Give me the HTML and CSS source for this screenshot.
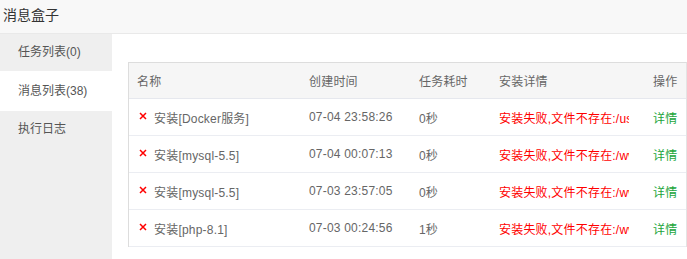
FILE: index.html
```html
<!DOCTYPE html>
<html lang="zh-CN">
<head>
<meta charset="utf-8">
<title>消息盒子</title>
<link rel="stylesheet" href="styles.css">
</head>
<body>
<div class="box">
  <div class="title">消息盒子</div>
  <div class="main">
    <ul class="side">
      <li class="tab">任务列表(0)</li>
      <li class="tab active">消息列表(38)</li>
      <li class="tab">执行日志</li>
    </ul>
    <div class="content">
      <div class="table">
        <div class="row head">
          <div class="cell">名称</div>
          <div class="cell">创建时间</div>
          <div class="cell">任务耗时</div>
          <div class="cell">安装详情</div>
          <div class="cell">操作</div>
        </div>
        <div class="row">
          <div class="cell name"><svg class="x" viewBox="0 0 8 8"><path d="M1 1L7 7M7 1L1 7"/></svg>安装[Docker服务]</div>
          <div class="cell">07-04 23:58:26</div>
          <div class="cell">0秒</div>
          <div class="cell"><div class="err">安装失败,文件不存在:/usr/local/docker</div></div>
          <div class="cell"><a class="link">详情</a></div>
        </div>
        <div class="row">
          <div class="cell name"><svg class="x" viewBox="0 0 8 8"><path d="M1 1L7 7M7 1L1 7"/></svg>安装[mysql-5.5]</div>
          <div class="cell">07-04 00:07:13</div>
          <div class="cell">0秒</div>
          <div class="cell"><div class="err">安装失败,文件不存在:/www/server/mysql</div></div>
          <div class="cell"><a class="link">详情</a></div>
        </div>
        <div class="row">
          <div class="cell name"><svg class="x" viewBox="0 0 8 8"><path d="M1 1L7 7M7 1L1 7"/></svg>安装[mysql-5.5]</div>
          <div class="cell">07-03 23:57:05</div>
          <div class="cell">0秒</div>
          <div class="cell"><div class="err">安装失败,文件不存在:/www/server/mysql</div></div>
          <div class="cell"><a class="link">详情</a></div>
        </div>
        <div class="row">
          <div class="cell name"><svg class="x" viewBox="0 0 8 8"><path d="M1 1L7 7M7 1L1 7"/></svg>安装[php-8.1]</div>
          <div class="cell">07-03 00:24:56</div>
          <div class="cell">1秒</div>
          <div class="cell"><div class="err">安装失败,文件不存在:/www/server/php</div></div>
          <div class="cell"><a class="link">详情</a></div>
        </div>
      </div>
    </div>
  </div>
</div>
</body>
</html>
```

FILE: styles.css
```css
* { box-sizing: border-box; }
html, body {
  margin: 0;
  padding: 0;
  background: #fff;
}
body {
  font-family: "Liberation Sans", "Noto Sans CJK SC", sans-serif;
  font-size: 12px;
  color: #666;
  width: 687px;
  height: 259px;
  overflow: hidden;
}
.box {
  display: flex;
  flex-direction: column;
  height: 259px;
}
.title {
  height: 34px;
  line-height: 30px;
  padding-left: 3px;
  font-size: 14px;
  color: #333;
  background: #f8f8f8;
  border-bottom: 1px solid #e9e9e9;
}
.main {
  flex: 1;
  display: flex;
}
.side {
  list-style: none;
  margin: 0;
  padding: 0;
  width: 112px;
  background: #efefef;
}
.tab {
  height: 37px;
  line-height: 37px;
  padding-left: 18px;
  color: #555;
}
.tab.active {
  height: 40px;
  line-height: 40px;
  background: #fff;
}
.content {
  flex: 1;
  padding: 28px 0 0 16px;
}
.table {
  border: 1px solid #ddd;
  border-right-color: #e4e4e4;
  border-bottom: none;
  letter-spacing: 0.2px;
}
.row {
  display: grid;
  grid-template-columns: 172px 110px 80px 154px 1fr;
  height: 37px;
  border-bottom: 1px solid #ebedf2;
  align-items: center;
}
.row.head {
  height: 36px;
  background: #f6f6f6;
  border-bottom-color: #e6e8ee;
}
.cell {
  padding-left: 8px;
  white-space: nowrap;
  overflow: hidden;
}
.name {
  display: flex;
  align-items: center;
  padding-left: 10px;
}
.x {
  width: 8px;
  height: 8px;
  margin-right: 7px;
  margin-top: -3px;
}
.x path {
  stroke: #f00;
  stroke-width: 1.5;
  fill: none;
}
.err {
  width: 130px;
  overflow: hidden;
  color: #f00;
}
.link {
  color: #20a53a;
  cursor: pointer;
}
```
